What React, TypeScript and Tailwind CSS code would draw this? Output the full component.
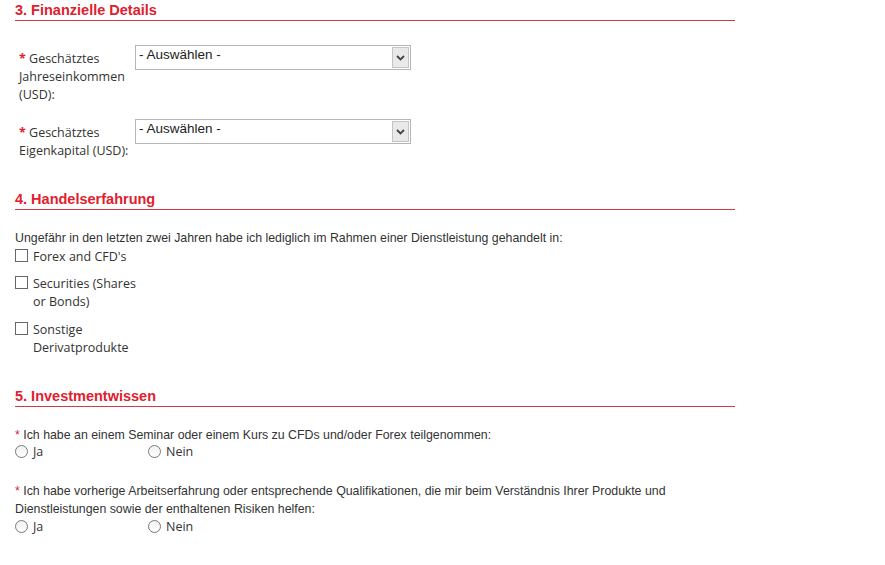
import React from "react";

const arial = { fontFamily: '"Liberation Sans", Arial, sans-serif' };
const open = { fontFamily: '"Open Sans", "Segoe UI", sans-serif' };

function Heading({ children }: { children: React.ReactNode }) {
  return (
    <div
      className="text-[14.5px] font-bold leading-[17px] text-[#e0202e] border-b border-[#d23a44] pt-[1px] pb-[1px]"
      style={arial}
    >
      {children}
    </div>
  );
}

function Select() {
  return (
    <div className="relative w-[276px] h-[25px] border border-[#b5b5b5] bg-white">
      <span className="absolute left-[3px] top-0 text-[13.5px] leading-[17px] text-[#222]" style={arial}>
        - Auswählen -
      </span>
      <span className="absolute right-[1px] top-[1px] w-[17px] h-[21px] border border-[#c4c4c4] bg-[#e9e9e9] flex items-center justify-center">
        <svg width="9" height="6" viewBox="0 0 9 6">
          <path d="M1 1 L4.5 4.5 L8 1" stroke="#444" strokeWidth="1.8" fill="none" />
        </svg>
      </span>
    </div>
  );
}

function Star() {
  return <span className="text-[#e0202e] font-bold">*</span>;
}

function Checkbox({ label, className = "" }: { label: string; className?: string }) {
  return (
    <div className={"flex items-start " + className}>
      <span className="mt-[1px] w-[13px] h-[13px] border border-[#666] bg-white shrink-0" />
      <span className="ml-[5px] w-[106px] text-[12.5px] leading-[18px] text-[#333]" style={open}>
        {label}
      </span>
    </div>
  );
}

function Radio({ label }: { label: string }) {
  return (
    <div className="flex items-center w-[133px] h-[14px]">
      <span className="w-[13px] h-[13px] rounded-full border border-[#777] bg-gradient-to-b from-[#f2f2f2] to-white shrink-0" />
      <span className="ml-[5px] mt-[2px] text-[12.5px] leading-[14px] text-[#333]" style={open}>
        {label}
      </span>
    </div>
  );
}

export default function App() {
  return (
    <div className="w-[885px] h-[565px] bg-white pl-[15px] pt-[1px] overflow-hidden">
      <div className="w-[720px]">
        <Heading>3. Finanzielle Details</Heading>

        <div className="mt-[24px] flex items-start">
          <div className="w-[120px] pl-[4px] pt-[5px] text-[12.5px] leading-[18px] text-[#333]" style={open}>
            <Star /> Geschätztes Jahreseinkommen (USD):
          </div>
          <Select />
        </div>

        <div className="mt-[15px] flex items-start">
          <div className="w-[120px] pl-[4px] pt-[5px] text-[12.5px] leading-[18px] text-[#333]" style={open}>
            <Star /> Geschätztes Eigenkapital (USD):
          </div>
          <Select />
        </div>

        <div className="mt-[30px]">
          <Heading>4. Handelserfahrung</Heading>
        </div>

        <div className="mt-[19px] text-[12.35px] leading-[18px] text-[#333]" style={arial}>
          Ungefähr in den letzten zwei Jahren habe ich lediglich im Rahmen einer Dienstleistung gehandelt in:
        </div>
        <div className="flex flex-col mt-[1px]">
          <Checkbox label="Forex and CFD's" />
          <Checkbox label="Securities (Shares or Bonds)" className="mt-[9px]" />
          <Checkbox label="Sonstige Derivatprodukte" className="mt-[10px]" />
        </div>

        <div className="mt-[30px]">
          <Heading>5. Investmentwissen</Heading>
        </div>

        <div className="mt-[19px] text-[12.35px] leading-[18px] text-[#333]" style={arial}>
          <span className="text-[#e0202e]">*</span> Ich habe an einem Seminar oder einem Kurs zu CFDs und/oder Forex teilgenommen:
        </div>
        <div className="flex">
          <Radio label="Ja" />
          <Radio label="Nein" />
        </div>

        <div className="mt-[24px] text-[12.35px] leading-[18px] text-[#333]" style={arial}>
          <span className="text-[#e0202e]">*</span> Ich habe vorherige Arbeitserfahrung oder entsprechende Qualifikationen, die mir beim Verständnis Ihrer Produkte und Dienstleistungen sowie der enthaltenen Risiken helfen:
        </div>
        <div className="flex mt-[1px]">
          <Radio label="Ja" />
          <Radio label="Nein" />
        </div>
      </div>
    </div>
  );
}
